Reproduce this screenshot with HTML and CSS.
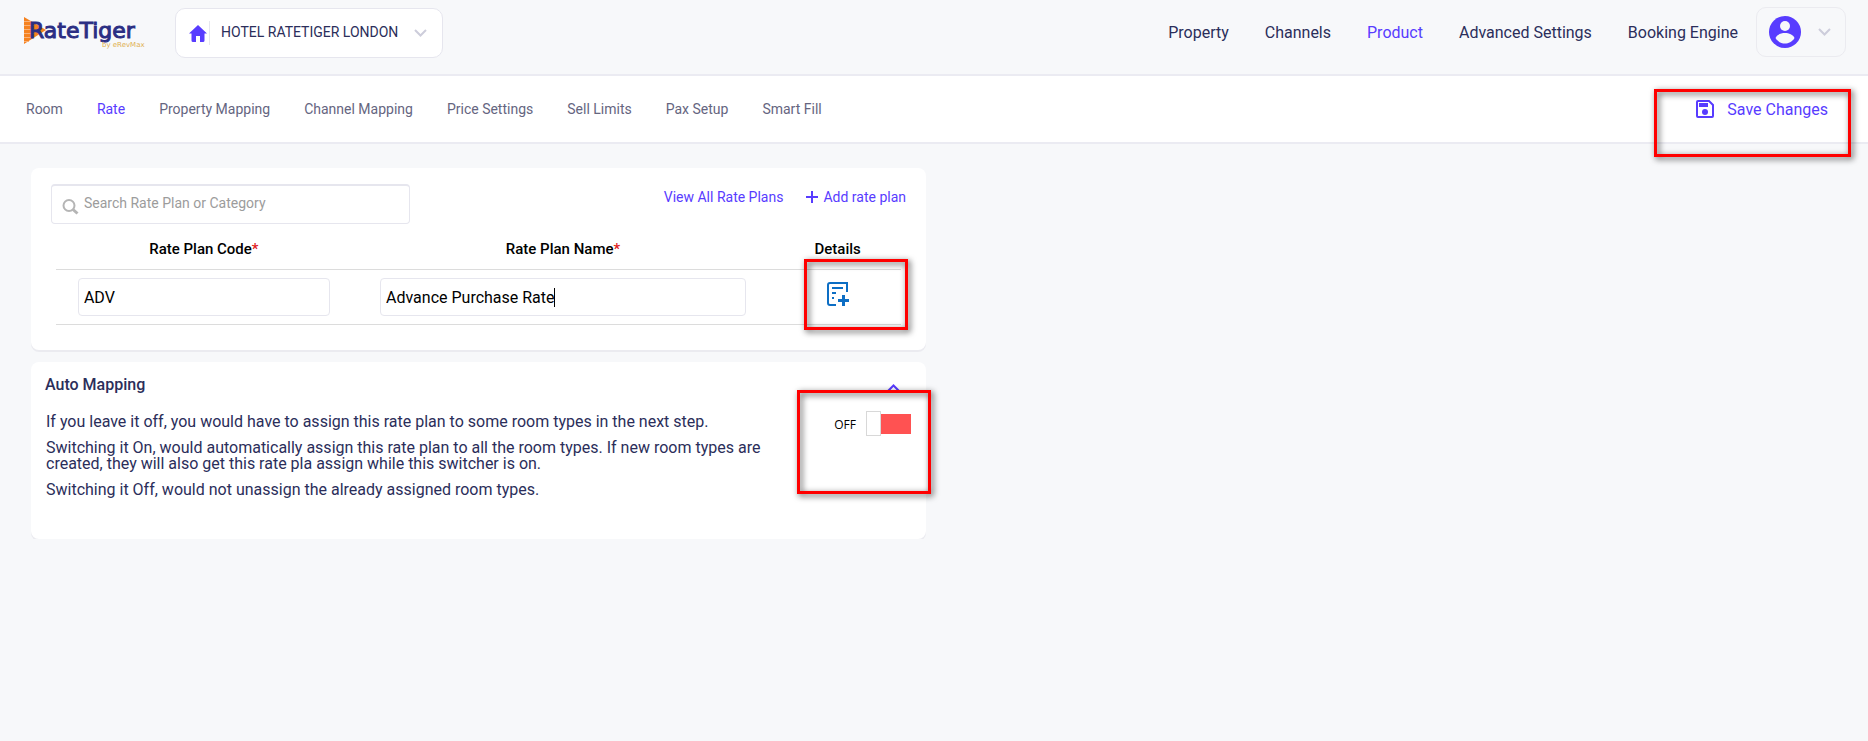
FILE: index.html
```html
<!DOCTYPE html>
<html lang="en">
<head>
<meta charset="UTF-8">
<meta name="viewport" content="width=device-width, initial-scale=1.0">
<title>RateTiger - Rate Plans</title>
<link rel="stylesheet" href="styles.css">
</head>
<body>

<header class="header">
    <a href="#" class="logo">
        <svg width="128" height="36" viewBox="0 0 128 36" role="img" aria-label="RateTiger by eRevMax">
            <path class="logo-mark" d="M4 2L26 15L4 29Z"/>
            <path class="logo-lines" d="M4 6.500H12M4 10.500H14M4 14.500H14M4 18.500H14M4 22.500H14M4 26.500H9"/>
            <text class="logo-name" x="9" y="23">RateTiger</text>
            <text class="logo-by" x="82" y="32">by eRevMax</text>
        </svg>
    </a>

    <div class="hotel">
        <svg class="hotel-icon" width="18" height="17" viewBox="0 0 18 17">
            <path d="M9 0L0 8.500H2.500V15.500Q2.500 17 4 17H7V11H11V17H14Q15.500 17 15.500 15.500V8.500H18Z"/>
        </svg>
        <select class="hotel-select" aria-label="Hotel">
            <option>HOTEL RATETIGER LONDON</option>
        </select>
        <svg class="chevron" width="13" height="8" viewBox="0 0 13 8"><path d="M1 1L6.500 6.500L12 1"/></svg>
    </div>

    <nav class="main-nav">
        <a href="#">Property</a>
        <a href="#">Channels</a>
        <a href="#" class="active">Product</a>
        <a href="#">Advanced Settings</a>
        <a href="#">Booking Engine</a>
    </nav>

    <button type="button" class="user" aria-label="Account">
        <svg width="32" height="32" viewBox="0 0 32 32">
            <circle cx="16" cy="16" r="16" fill="#583cff"/>
            <circle cx="16" cy="10" r="5" fill="#f7f8fa"/>
            <path d="M6.500 22C8 18.500 12 17 16 17S24 18.500 25.500 22C23 26 19.500 27.500 16 27.500S9 26 6.500 22Z" fill="#f7f8fa"/>
        </svg>
        <svg class="chevron" width="13" height="8" viewBox="0 0 13 8"><path d="M1 1L6.500 6.500L12 1"/></svg>
    </button>
</header>

<div class="subnav">
    <nav class="tabs">
        <a href="#">Room</a>
        <a href="#" class="active">Rate</a>
        <a href="#">Property Mapping</a>
        <a href="#">Channel Mapping</a>
        <a href="#">Price Settings</a>
        <a href="#">Sell Limits</a>
        <a href="#">Pax Setup</a>
        <a href="#">Smart Fill</a>
    </nav>
    <div class="save-wrap">
        <button type="button" class="save">
            <svg width="18" height="18" viewBox="0 0 18 18">
                <path d="M2 1H13L17 5V16Q17 17 16 17H2Q1 17 1 16V2Q1 1 2 1Z" fill="none" stroke="#583cff" stroke-width="2"/>
                <path d="M3 3H12V7H3Z" fill="#583cff"/>
                <circle cx="9" cy="12" r="3" fill="#583cff"/>
            </svg>
            Save Changes
        </button>
        <span class="mark mark-save"></span>
    </div>
</div>

<main class="content">
    <section class="card plans">
        <div class="toolbar">
            <div class="search">
                <svg width="17" height="16" viewBox="0 0 17 16">
                    <circle cx="7" cy="6.500" r="5.500" fill="none" stroke="#b5b5b5" stroke-width="2"/>
                    <path d="M11 10.500L15.500 14.500" stroke="#b5b5b5" stroke-width="3"/>
                </svg>
                <input type="text" aria-label="Search" placeholder="Search Rate Plan or Category">
            </div>
            <div class="links">
                <a href="#">View All Rate Plans</a>
                <a href="#" class="add">
                    <svg width="12" height="12" viewBox="0 0 12 12"><path d="M6 0V12M0 6H12" stroke="#583cff" stroke-width="2"/></svg>
                    Add rate plan
                </a>
            </div>
        </div>

        <table>
            <thead>
                <tr>
                    <th class="col-code"><label for="code">Rate Plan Code<span class="req">*</span></label></th>
                    <th class="col-name"><label for="name">Rate Plan Name<span class="req">*</span></label></th>
                    <th class="col-details">Details</th>
                </tr>
            </thead>
            <tbody>
                <tr>
                    <td><input type="text" id="code" class="field" value="ADV"></td>
                    <td>
                        <div class="field-wrap">
                            <input type="text" id="name" class="field" value="Advance Purchase Rate">
                            <span class="caret"></span>
                        </div>
                    </td>
                    <td>
                        <div class="details-wrap">
                            <button type="button" class="details" aria-label="Details">
                                <svg width="22" height="24" viewBox="0 0 22 24">
                                    <path d="M9 23H3Q1 23 1 21V3Q1 1 3 1H20V10" fill="none" stroke="#0d6ec4" stroke-width="2"/>
                                    <path d="M5 6H16M5 11H9M5 16H7" stroke="#0d6ec4" stroke-width="2"/>
                                    <path d="M16.500 13V24M11 18.500H22" stroke="#0d6ec4" stroke-width="3"/>
                                </svg>
                            </button>
                            <span class="mark mark-details"></span>
                        </div>
                    </td>
                </tr>
            </tbody>
        </table>
    </section>

    <section class="card mapping">
        <div class="mapping-head">
            <h2>Auto Mapping</h2>
            <button type="button" class="collapse" aria-label="Collapse">
                <svg width="13" height="8" viewBox="0 0 13 8"><path d="M1 7L6.500 1.500L12 7" fill="none" stroke="#583cff" stroke-width="2"/></svg>
            </button>
        </div>
        <div class="mapping-body">
            <div class="mapping-text">
                <p>If you leave it off, you would have to assign this rate plan to some room types in the next step.</p>
                <p>Switching it On, would automatically assign this rate plan to all the room types. If new room types are created, they will also get this rate pla assign while this switcher is on.</p>
                <p>Switching it Off, would not unassign the already assigned room types.</p>
            </div>
            <div class="switch">
                <label for="auto">OFF</label>
                <input type="checkbox" id="auto">
                <span class="mark mark-switch"></span>
            </div>
        </div>
    </section>
</main>

</body>
</html>
```
FILE: styles.css
```css
*,
*::before,
*::after {
    box-sizing: border-box;
}

body {
    margin: 0;
    background-color: #f7f8fa;
    font-family: Roboto, sans-serif;
    font-size: 16px;
    color: #2b2e5a;
}

a {
    color: inherit;
    text-decoration: none;
}

button {
    padding: 0;
    border: none;
    background: none;
    font: inherit;
    cursor: pointer;
}

svg {
    display: block;
    flex-shrink: 0;
}

.chevron path {
    fill: none;
    stroke: #cdcddb;
    stroke-width: 2;
}

/* Header */
.header {
    display: flex;
    align-items: flex-start;
    padding: 7px 22px 16px 20px;
    border-bottom: 2px solid #ebebf2;
}

.logo {
    margin-top: 8px;
}

.logo-mark {
    fill: #f5821f;
}

.logo-lines {
    stroke: #f9b177;
    stroke-width: 1;
}

.logo-name {
    font-family: "DejaVu Sans", sans-serif;
    font-size: 22px;
    fill: #2b2e83;
    stroke: #2b2e83;
    stroke-width: 1;
}

.logo-by {
    font-family: "DejaVu Sans", sans-serif;
    font-size: 7px;
    fill: #e0b050;
}

.hotel {
    display: flex;
    align-items: center;
    height: 50px;
    margin: 1px 0 0 27px;
    padding: 0 15px 0 13px;
    border: 1px solid #e6e6ee;
    border-radius: 10px;
    background-color: #fff;
}

.hotel-icon {
    fill: #583cff;
}

.hotel-select {
    width: 205px;
    height: 24px;
    margin-left: 2px;
    padding: 0 0 2px 11px;
    border: none;
    border-left: 1px solid #e6e6ee;
    background: none;
    font: 14px Roboto, sans-serif;
    color: #2b2e5a;
    appearance: none;
}

.main-nav {
    display: flex;
    gap: 36px;
    margin-left: auto;
    line-height: 20px;
    padding-top: 16px;
}

.active {
    color: #583cff;
}

.user {
    display: flex;
    align-items: center;
    gap: 17px;
    height: 50px;
    margin-left: 18px;
    padding: 0 14px 0 12px;
    border: 1px solid #ebebf0;
    border-radius: 10px;
}

/* Sub navigation */
.subnav {
    display: flex;
    justify-content: space-between;
    align-items: center;
    height: 68px;
    padding: 0 40px 0 26px;
    border-bottom: 2px solid #ebebf2;
    background-color: #fff;
}

.tabs {
    display: flex;
    gap: 34px;
    font-size: 14px;
    color: #65657f;
}

.tabs .active {
    color: #583cff;
}

.save-wrap,
.details-wrap,
.field-wrap,
.switch {
    position: relative;
}

.save {
    display: flex;
    align-items: center;
    gap: 13px;
    color: #583cff;
}

/* Red highlight frames */
.mark {
    position: absolute;
    border: 3px solid #f00;
    filter: drop-shadow(2px 2px 3px rgba(0, 0, 0, 0.7));
    pointer-events: none;
}

.mark-save {
    top: -11px;
    right: -23px;
    width: 197px;
    height: 68px;
}

.mark-details {
    top: -23px;
    left: 30px;
    width: 104px;
    height: 71px;
}

.mark-switch {
    top: -19px;
    right: -20px;
    width: 134px;
    height: 104px;
}

/* Content */
.content {
    width: 50%;
    padding: 24px 8px 0 31px;
}

.card {
    border-radius: 8px;
    background-color: #fff;
    box-shadow: 0 2px 0 #ebebf0;
}

.plans {
    padding: 16px 25px 25px;
}

.toolbar {
    display: flex;
    justify-content: space-between;
    margin: 0 -5px;
}

.search {
    display: flex;
    align-items: center;
    width: 359px;
    height: 40px;
    padding-left: 10px;
    border: 1px solid #e6e6ee;
    border-top-width: 2px;
    border-radius: 4px;
}

.search svg {
    margin-top: 4px;
}

.search input {
    flex: 1;
    padding: 0 0 4px 5px;
    border: none;
    outline: none;
    background: none;
    font: 14px Roboto, sans-serif;
}

.search input::placeholder {
    color: #9c9c9c;
}

.links {
    display: flex;
    gap: 23px;
    height: 26px;
    align-items: center;
    font-size: 14px;
    color: #583cff;
}

.add {
    display: flex;
    align-items: center;
    gap: 5px;
}

table {
    width: 100%;
    table-layout: fixed;
    border-collapse: collapse;
}

th {
    height: 45px;
    padding: 0 0 6px;
    border-bottom: 1px solid #dcdcdc;
    font-size: 15px;
    font-weight: 500;
    color: #000;
    vertical-align: bottom;
    line-height: 28px;
}

td {
    height: 55px;
    padding: 0;
    border-bottom: 1px solid #dcdcdc;
}

.col-code {
    width: 35%;
}

.col-name {
    width: 50%;
}

.col-details {
    width: 15%;
}

.req {
    color: #e02020;
}

td > .field {
    display: block;
    width: 252px;
    margin: 0 auto;
}

.field-wrap {
    width: 366px;
    margin: 0 auto;
}

.field {
    display: block;
    width: 100%;
    height: 38px;
    padding: 1px 5px 0;
    border: 1px solid #e6e6ee;
    border-radius: 4px;
    font: 16px Roboto, sans-serif;
    color: #000;
}

.caret {
    position: absolute;
    top: 10px;
    left: 174px;
    width: 1px;
    height: 19px;
    background-color: #000;
}

.details-wrap {
    padding-bottom: 6px;
}

.details {
    display: block;
    margin: 0 auto;
}

/* Auto Mapping */
.mapping {
    margin-top: 12px;
    padding: 13px 15px 31px 14px;
}

.mapping-head {
    display: flex;
    justify-content: space-between;
    padding-right: 11px;
}

.mapping h2 {
    margin: 0;
    font-size: 16px;
    font-weight: 500;
    line-height: 20px;
}

.collapse {
    padding-top: 6px;
}

.mapping-body {
    display: flex;
    justify-content: space-between;
    align-items: flex-start;
    padding-top: 14px;
}

.mapping-text {
    width: 730px;
    padding: 5px 0 0 1px;
}

.mapping p {
    margin: 0 0 10px;
    line-height: 16px;
}

.switch {
    display: flex;
    align-items: center;
    gap: 10px;
    font-family: "Open Sans", sans-serif;
    font-size: 12px;
    color: #000;
}

.switch label {
    line-height: 29px;
    padding-top: 1px;
}

/* White knob on the left, red track on the right */
.switch input {
    display: flex;
    align-items: center;
    width: 45px;
    height: 25px;
    margin: 0;
    appearance: none;
}

.switch input::before {
    content: "";
    width: 15px;
    height: 25px;
    border: 1px solid #d8d8d8;
    background-color: #fff;
}

.switch input::after {
    content: "";
    flex: 1;
    height: 20px;
    background-color: #ff5252;
}
```
